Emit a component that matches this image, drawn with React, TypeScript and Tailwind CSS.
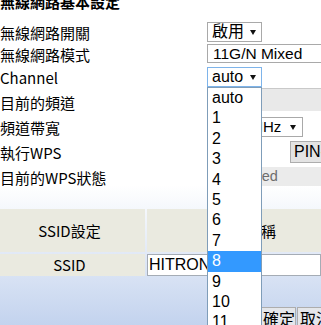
import React from "react";

const opts = ["auto", "1", "2", "3", "4", "5", "6", "7", "8", "9", "10", "11", "12", "13"];

const Arrow = () => (
  <svg width="6" height="5" viewBox="0 0 6 5" className="shrink-0">
    <path d="M0 0H6L3 5Z" fill="#111" />
  </svg>
);

interface RowProps {
  label: string;
  h: string;
  children?: React.ReactNode;
}

const Row = ({ label, h, children }: RowProps) => (
  <div className={`flex ${h}`}>
    <div className="flex w-[207px] shrink-0 items-center whitespace-nowrap font-['Noto_Sans_CJK_TC',sans-serif] text-[15px] leading-[18px]">
      {label}
    </div>
    <div className="flex min-w-0 flex-1 items-start whitespace-nowrap font-['Liberation_Sans','Noto_Sans_CJK_TC',sans-serif]">
      {children}
    </div>
  </div>
);

export default function App() {
  return (
    <div className="relative h-[325px] w-[321px] overflow-hidden bg-[linear-gradient(to_bottom,#ffffff_0px,#ffffff_185px,#c3d3ee_325px)] text-black">
      <div className="-mt-[6px] mb-[13px] h-[15px] whitespace-nowrap font-['Noto_Sans_CJK_TC',sans-serif] text-[15px] font-bold leading-[15px]">
        無線網路基本設定
      </div>

      <Row label="無線網路開關" h="h-[22px]">
        <div className="flex h-[20px] w-[55px] items-center border border-[#a9a9a9] bg-white pl-[4px] pr-[5px] text-[16px] leading-[18px]">
          <span>啟用</span>
          <span className="ml-auto">
            <Arrow />
          </span>
        </div>
      </Row>

      <Row label="無線網路模式" h="h-[22px]">
        <div className="flex h-[19px] w-[140px] shrink-0 items-center border border-[#a9a9a9] bg-white pl-[5px] text-[15.5px] leading-[17px]">
          11G/N Mixed
        </div>
      </Row>

      <Row label="Channel" h="h-[24px]">
        <div className="mt-[1px] flex h-[20px] w-[55px] items-center border border-[#7eb4ea] bg-white pl-[4px] pr-[5px] text-[16px] leading-[18px]">
          <span>auto</span>
          <span className="ml-auto">
            <Arrow />
          </span>
        </div>
      </Row>

      <Row label="目前的頻道" h="h-[26px]">
        <div className="-mt-[2px] h-[23px] w-[140px] shrink-0 border-t border-[#c9c9c9] bg-[#e9e9e9]" />
      </Row>

      <Row label="頻道帶寬" h="h-[24px]">
        <div className="mt-[1px] flex h-[20px] w-[96px] shrink-0 items-center border border-[#a9a9a9] bg-white pl-[5px] pr-[6px] text-[15px] leading-[18px]">
          <span>20/40MHz</span>
          <span className="ml-auto">
            <Arrow />
          </span>
        </div>
      </Row>

      <Row label="執行WPS" h="h-[26px]">
        <div className="ml-[83px] mt-[1px] flex h-[22px] shrink-0 items-center border border-[#adadad] bg-[#e3e3e3] pl-[3px] pr-[6px] text-[16px] leading-[18px]">
          PIN碼
        </div>
      </Row>

      <Row label="目前的WPS狀態" h="h-[24px]">
        <div className="mt-[1px] flex h-[19px] w-[140px] shrink-0 items-center bg-[#ebebeb] text-[14.5px] leading-[17px] text-[#6d6d6d]">
          Configured
        </div>
      </Row>

      <div className="-ml-[6px] mt-[19px] grid grid-cols-[151px_1fr] gap-[2px] font-['Noto_Sans_CJK_TC',sans-serif] text-[15px] leading-[18px]">
        <div className="flex h-[43px] items-center justify-center bg-[#eaeae0]">SSID設定</div>
        <div className="flex h-[43px] items-center bg-[#eaeae0] pl-[99px]">名稱</div>
        <div className="flex h-[22px] items-center justify-center bg-[#eaeae0]">SSID</div>
        <div className="flex h-[22px] items-center border border-[#a5acb5] bg-white pl-[1px] font-['Liberation_Sans',sans-serif] text-[16px]">
          HITRON-A1B2
        </div>
      </div>

      <div className="mt-[31px] flex pl-[261px] font-['Noto_Sans_CJK_TC',sans-serif] text-[16px] leading-[18px]">
        <div className="flex h-[22px] shrink-0 items-center border border-[#adadad] bg-[#e4e6ea] pl-[1px]">確定</div>
        <div className="ml-[1px] flex h-[22px] shrink-0 items-center border border-[#adadad] bg-[#e4e6ea] pl-[2px] pr-[6px]">
          取消
        </div>
      </div>

      <div className="absolute left-[207px] top-[87px] h-[260px] w-[55px] border border-[#7f9db9] bg-white font-['Liberation_Sans',sans-serif] text-[16px]">
        {opts.map((o) => (
          <div
            key={o}
            className={
              o === "8"
                ? "h-[20.4px] bg-[#3399ff] pl-[4px] leading-[20.4px] text-white"
                : "h-[20.4px] pl-[4px] leading-[20.4px] text-black"
            }
          >
            {o}
          </div>
        ))}
      </div>
    </div>
  );
}
